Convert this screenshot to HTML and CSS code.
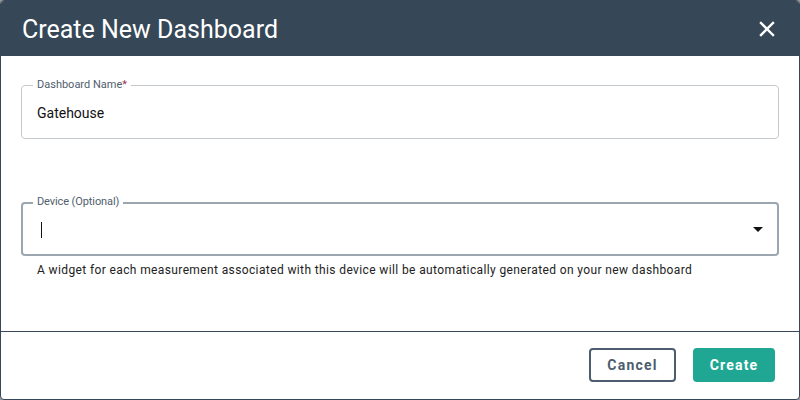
FILE: index.html
```html
<!DOCTYPE html>
<html>
<head>
<meta charset="utf-8">
<link rel="stylesheet" href="styles.css">
</head>
<body>
<div class="dialog">
  <header class="dialog-header">
    <h1 class="dialog-title">Create New Dashboard</h1>
    <button class="close-btn" aria-label="Close">
      <svg width="16" height="16" viewBox="0 0 16 16"><path d="M2 2 L14 14 M14 2 L2 14" stroke="#fff" stroke-width="2.4" stroke-linecap="square"/></svg>
    </button>
  </header>
  <main class="dialog-body">
    <div class="field">
      <span class="field-label">Dashboard Name<span class="req">*</span></span>
      <span class="field-value">Gatehouse</span>
    </div>
    <div class="field field-focused">
      <span class="field-label">Device (Optional)</span>
      <span class="caret"></span>
      <svg class="dropdown" width="10" height="5" viewBox="0 0 10 5"><path d="M0 0 L10 0 L5 5 Z" fill="#111"/></svg>
    </div>
    <p class="helper">A widget for each measurement associated with this device will be automatically generated on your new dashboard</p>
  </main>
  <footer class="dialog-footer">
    <button class="btn btn-outline">Cancel</button>
    <button class="btn btn-primary">Create</button>
  </footer>
</div>
</body>
</html>
```

FILE: styles.css
```css
* { box-sizing: border-box; }
html, body { margin: 0; padding: 0; }
body {
  width: 800px;
  height: 400px;
  background: #9a9a9a;
  font-family: Roboto, "Liberation Sans", sans-serif;
}
.dialog {
  width: 800px;
  height: 400px;
  background: #fff;
  border: 1px solid #36475a;
  border-radius: 4px;
  overflow: hidden;
  display: flex;
  flex-direction: column;
}
.dialog-header {
  background: #364757;
  height: 55px;
  flex: none;
  display: flex;
  align-items: center;
  justify-content: space-between;
  padding: 0 24px 0 21px;
}
.dialog-title {
  margin: 0;
  color: #fff;
  font-size: 25px;
  font-weight: 400;
  line-height: 1;
  padding-top: 1px;
}
.close-btn {
  background: none;
  border: 0;
  padding: 0;
  width: 16px;
  height: 16px;
  display: flex;
}
.dialog-body {
  flex: 1;
  padding: 29px 20px 0 20px;
  display: flex;
  flex-direction: column;
}
.field {
  position: relative;
  height: 54px;
  border: 1px solid #c3c8cd;
  border-radius: 4px;
  display: flex;
  align-items: center;
  padding: 0 16px;
}
.field-focused {
  margin-top: 63px;
  border: 2px solid #9ba6b0;
  padding: 0 14px 0 18px;
}
.field-label {
  position: absolute;
  top: -8px;
  left: 11px;
  padding: 0 4px;
  background: #fff;
  font-size: 11px;
  line-height: 14px;
  color: #4f5e6d;
}
.field-focused .field-label { top: -9px; left: 10px; letter-spacing: -0.1px; }
.req { color: #a0305a; }
.field-value {
  font-size: 14px;
  color: #111;
  padding-top: 1px;
  margin-left: -1px;
}
.caret {
  width: 1px;
  height: 16px;
  background: #111;
  margin-top: 1px;
}
.dropdown {
  margin-left: auto;
  margin-top: 1px;
}
.helper {
  margin: 7px 0 0 16px;
  font-size: 12px;
  color: #222;
  letter-spacing: 0.38px;
}
.dialog-footer {
  flex: none;
  height: 68px;
  border-top: 1px solid #36475a;
  display: flex;
  align-items: center;
  justify-content: flex-end;
  gap: 17px;
  padding: 0 24px 2px 0;
}
.btn {
  height: 34px;
  border-radius: 4px;
  font-family: Roboto, "Liberation Sans", sans-serif;
  font-size: 14px;
  font-weight: 700;
  letter-spacing: 1.2px;
  padding: 0;
}
.btn-outline {
  width: 87px;
  background: #fff;
  border: 2px solid #4b5d6e;
  color: #4b5d6e;
}
.btn-primary {
  width: 82px;
  background: #20a794;
  border: 0;
  color: #fff;
}
```
